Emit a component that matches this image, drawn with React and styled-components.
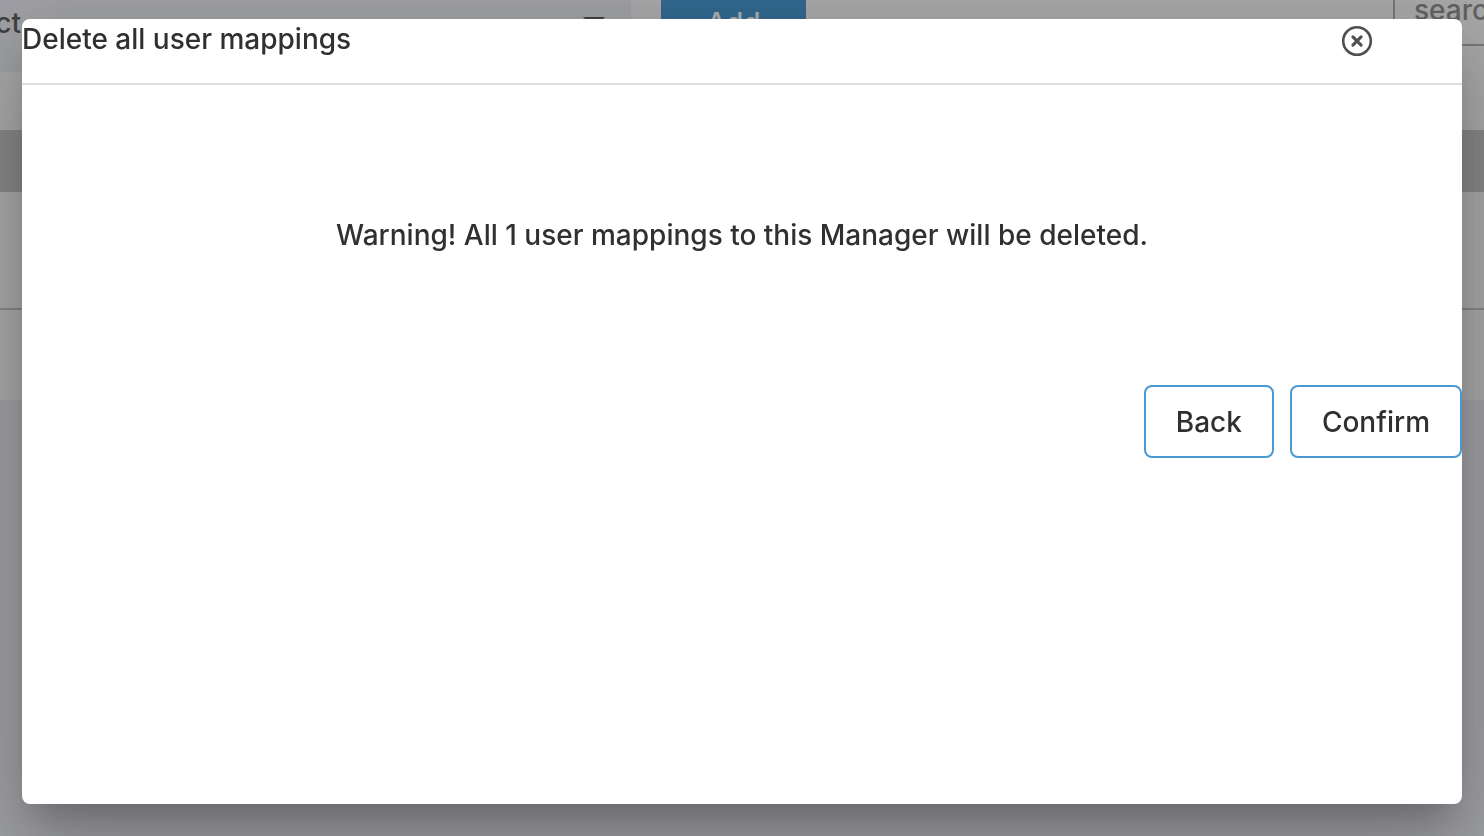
import React from 'react'
import styled, { createGlobalStyle } from 'styled-components'

const GlobalStyle = createGlobalStyle`
	* {
		box-sizing: border-box;
	}

	body {
		margin: 0;
		color: #303030;
		background: #ebecf3;
		font-family: Inter, "Open Sans", sans-serif;
		font-size: 28px;
		font-weight: 500;
		line-height: 36px;
	}

	button, input {
		font: inherit;
		color: inherit;
	}
`

const Page = styled.main`
	min-height: 100vh;
	overflow: hidden;
`

const Content = styled.section`
	background: #f8f8f8;
`

const Toolbar = styled.div`
	display: flex;
	align-items: flex-start;
	height: 72px;
`

const PickerButton = styled.button`
	display: flex;
	align-items: flex-start;
	justify-content: space-between;
	width: 631px;
	height: 72px;
	padding: 5px 26px 0 0;
	border: 0;
	background: #ebecf3;
`

const PickerLabel = styled.span`
	display: flex;
	justify-content: flex-end;
	width: 21px;
	overflow: hidden;
	color: #606060;
`

const Caret = styled.span`
	margin-top: 12px;
	border: 11px solid transparent;
	border-top-color: #606060;
	border-bottom: 0;
`

const AddButton = styled.button`
	width: 145px;
	height: 46px;
	margin-left: 30px;
	padding: 0;
	border: 0;
	color: #ffffff;
	background: #4a99d3;
`

const SearchInput = styled.input`
	width: 91px;
	height: 46px;
	margin-left: auto;
	padding: 0 0 24px 19px;
	border: solid #b0b0b0;
	border-width: 0 0 2px 2px;
	background: transparent;

	&::placeholder {
		color: #909090;
		opacity: 1;
	}
`

const Row = styled.div`
	height: ${props => props.$height};
	background: ${props => props.$header ? '#c8c8c8' : '#f8f8f8'};
	border-bottom: ${props => props.$line ? '2px solid #c4c4c4' : '0'};
`

const Backdrop = styled.div`
	position: fixed;
	inset: 0;
	display: flex;
	padding: 19px 22px 32px;
	background: rgba(0, 0, 0, 0.32);
`

const Dialog = styled.div`
	flex: 1;
	border-radius: 8px;
	background: #ffffff;
	box-shadow:
		0 22px 30px -14px rgba(0, 0, 0, 0.2),
		0 48px 76px 6px rgba(0, 0, 0, 0.14),
		0 18px 92px 16px rgba(0, 0, 0, 0.12);
`

const DialogHeader = styled.header`
	display: flex;
	align-items: flex-start;
	justify-content: space-between;
	height: 66px;
	padding: 2px 88px 0 0;
	border-bottom: 2px solid #dedede;
`

const Title = styled.h1`
	margin: 0;
	font-size: inherit;
	font-weight: inherit;
`

const CloseButton = styled.button`
	display: flex;
	margin-top: 3px;
	padding: 0;
	border: 0;
	background: none;
`

const Message = styled.p`
	margin: 0;
	padding: 132px 20px;
	text-align: center;
`

const Actions = styled.div`
	display: flex;
	justify-content: flex-end;
	gap: 16px;
`

const ActionButton = styled.button`
	height: 73px;
	padding: 0 30px;
	border: 2px solid #4a99d3;
	border-radius: 8px;
	background: #ffffff;
`

const CloseIcon = () => (
	<svg width="34" height="34" viewBox="0 0 34 34" fill="none" stroke="#505050" aria-hidden="true">
		<circle cx="17" cy="17" r="13.8" strokeWidth="2.6" />
		<path d="M12.9 12.9L21.1 21.1M21.1 12.9L12.9 21.1" strokeWidth="3.1" strokeLinecap="round" />
	</svg>
)

const MappingsPage = () => (
	<Page>
		<Content>
			<Toolbar>
				<PickerButton><PickerLabel>ct</PickerLabel><Caret /></PickerButton>
				<AddButton>Add</AddButton>
				<SearchInput placeholder="search" aria-label="Search mappings" />
			</Toolbar>
			<Row $height="58px" />
			<Row $height="62px" $header />
			<Row $height="118px" $line />
			<Row $height="90px" />
		</Content>
	</Page>
)

const DeleteDialog = ({ count }) => (
	<Backdrop>
		<Dialog role="dialog" aria-modal="true" aria-labelledby="dialog-title">
			<DialogHeader>
				<Title id="dialog-title">Delete all user mappings</Title>
				<CloseButton aria-label="Close"><CloseIcon /></CloseButton>
			</DialogHeader>
			<Message>Warning! All {count} user mappings to this Manager will be deleted.</Message>
			<Actions>
				<ActionButton>Back</ActionButton>
				<ActionButton>Confirm</ActionButton>
			</Actions>
		</Dialog>
	</Backdrop>
)

const App = () => (
	<>
		<GlobalStyle />
		<MappingsPage />
		<DeleteDialog count={1} />
	</>
)

export default App
